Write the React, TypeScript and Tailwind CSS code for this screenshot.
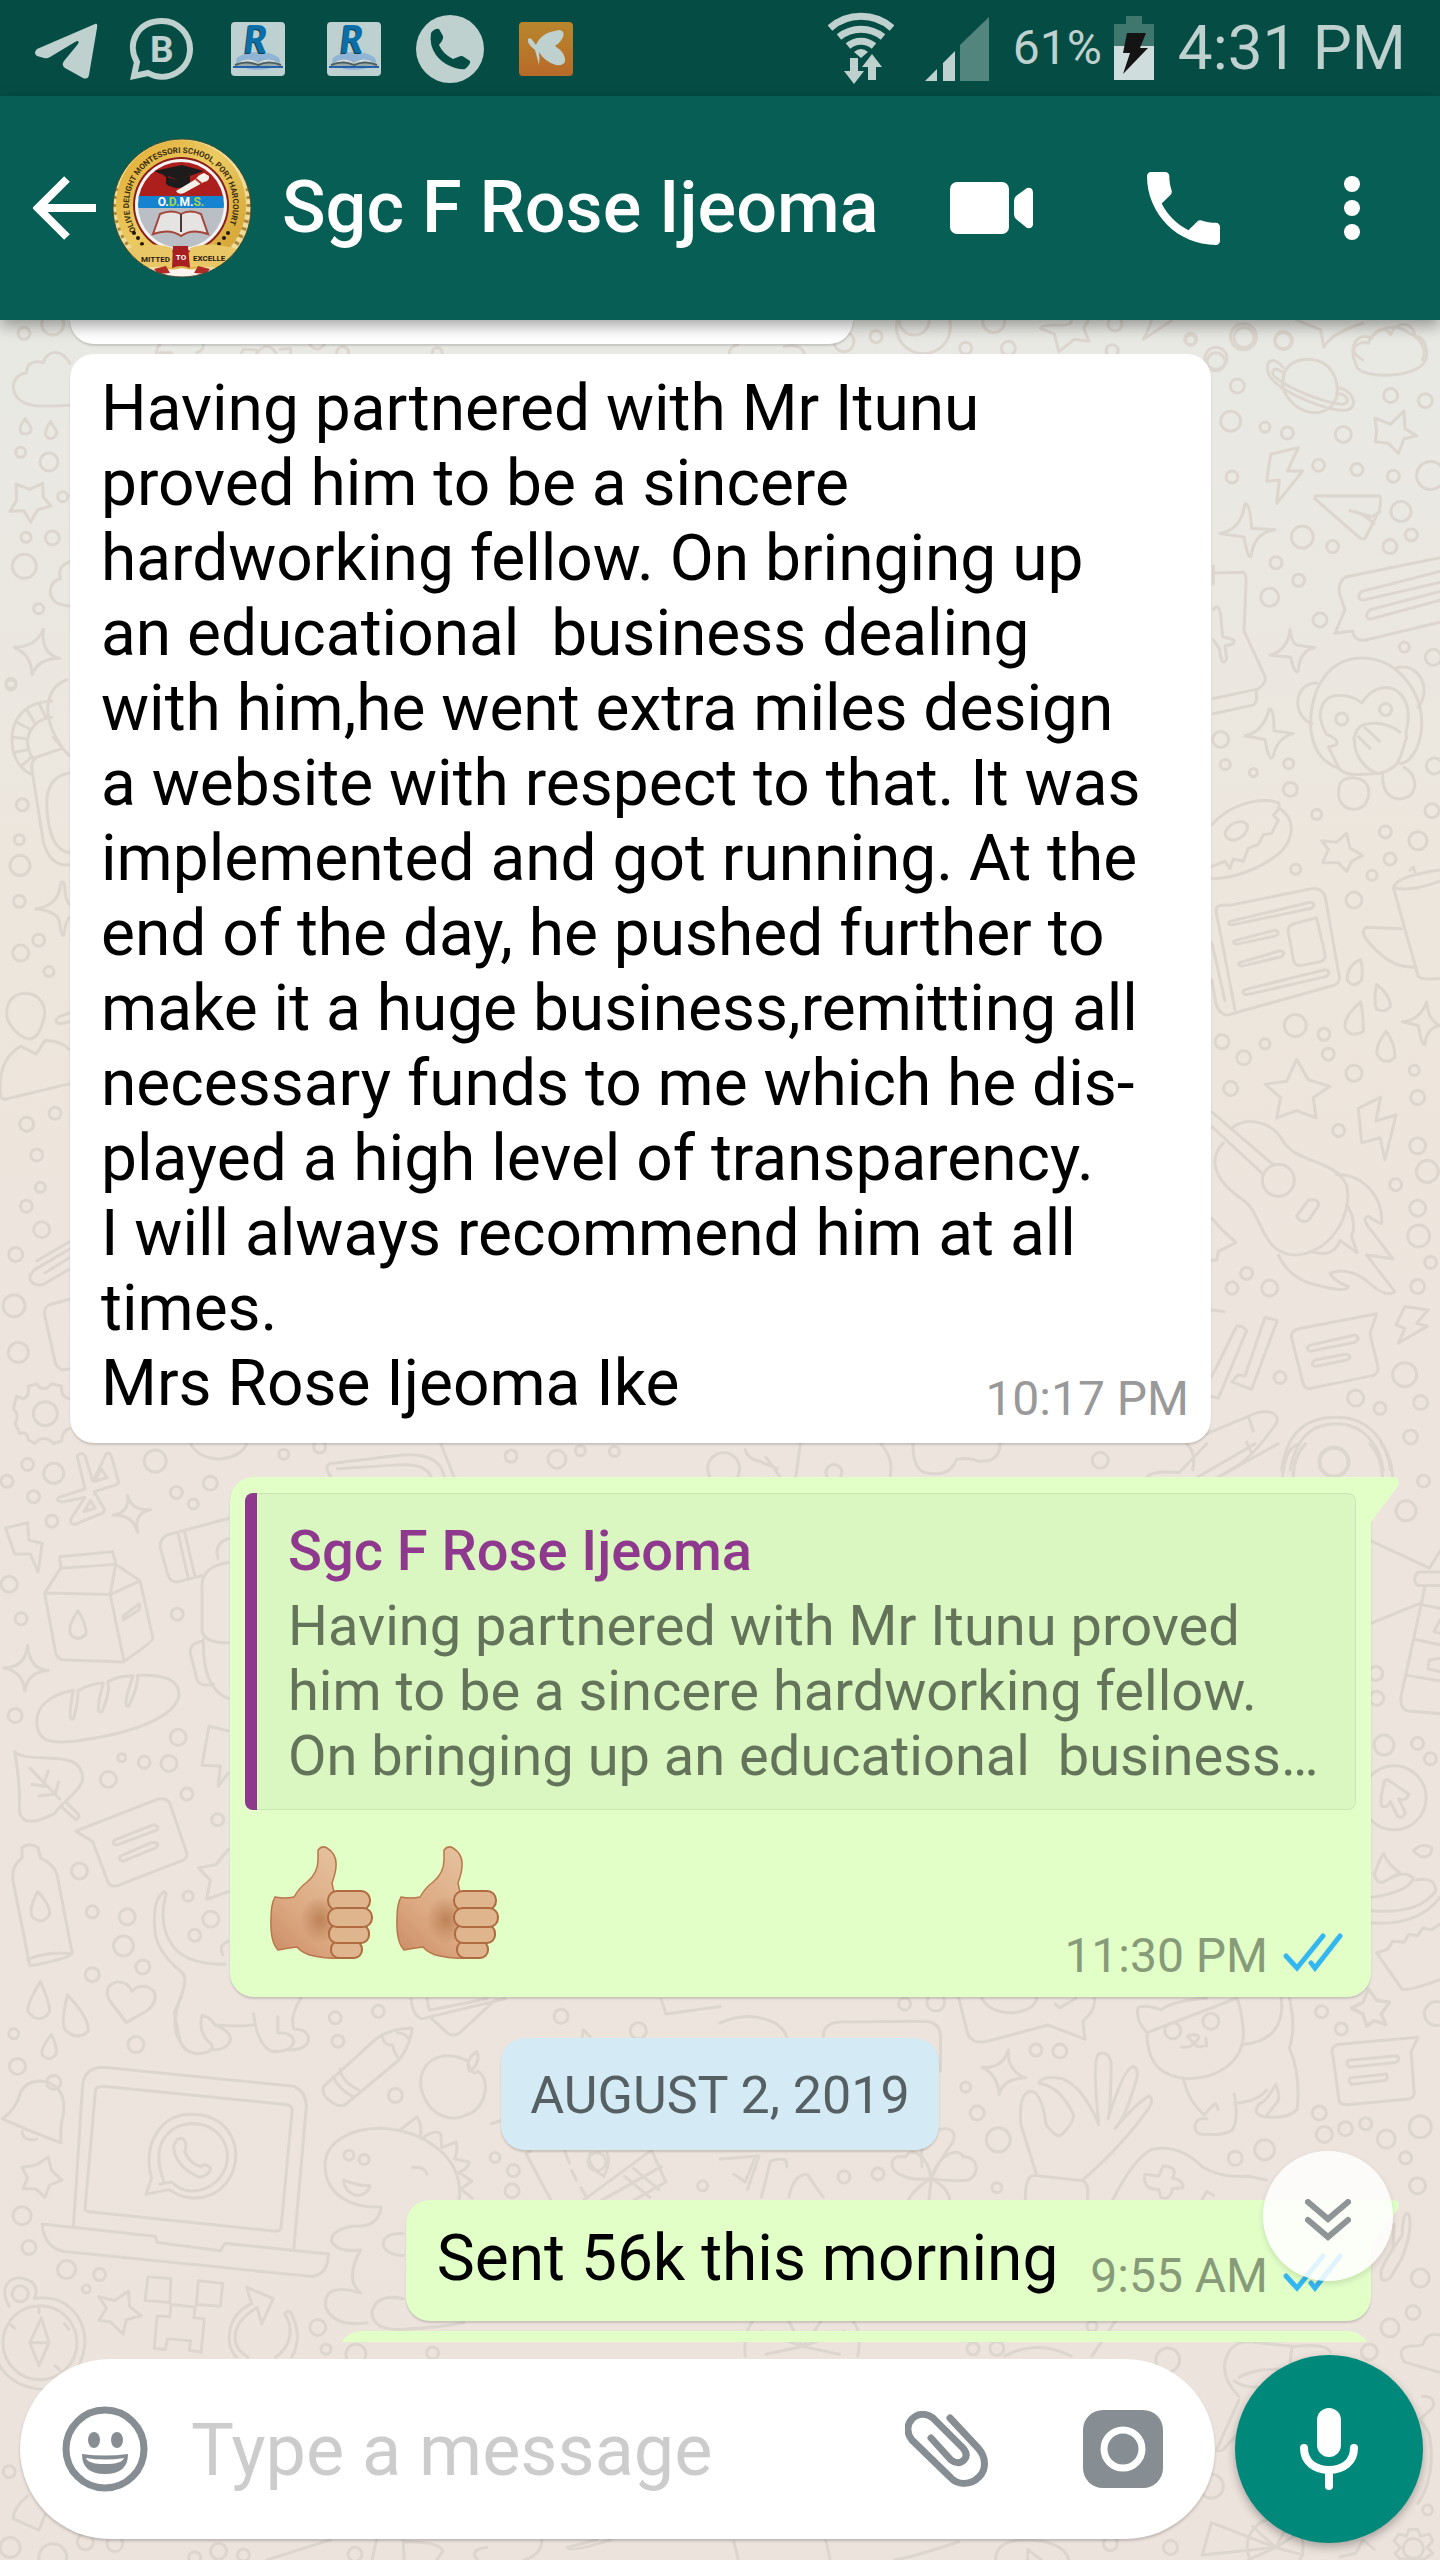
import type { ReactNode } from 'react';

type Patch = {
    x: number;
    y: number;
    sx: number;
    sy: number;
    paths: string[];
    dots: number[][];
};

// Wallpaper doodles, grouped by the area of the screen they sit in.
// dots are [x, y, radius]
const patches: Patch[] = [
    {
        x: 0, y: 300, sx: 0.3333, sy: 0.3333,
        paths: [
            'M210 190C180 140 140 155 130 188C100 180 80 190 80 218C40 225 30 260 50 290C75 325 130 320 210 315',
            'M76 356C60 375 55 390 66 400C80 405 95 400 93 385C90 370 80 370 76 356Z',
            'M152 364C136 385 132 405 142 413C155 420 172 410 170 395C165 378 155 380 152 364Z',
            'M48 552L88 568L128 550L130 592L152 618L112 630L92 666L72 632L30 634L50 600Z',
            'M210 785C180 795 175 815 182 835C150 845 140 880 165 905C180 915 195 917 210 918',
            'M130 988Q122 1062 180 1075Q115 1075 96 1124Q95 1065 43 1042Q110 1040 130 988Z',
            'M470 158Q470 142 480 134M480 158H515M590 158Q612 150 610 134M725 158L730 148L770 150M770 160Q800 120 828 158M840 148L872 145V158M930 134Q950 160 972 134',
        ],
        dots: [[72, 100, 6], [158, 72, 11], [62, 457, 5], [147, 486, 9], [188, 590, 5], [78, 712, 5], [157, 714, 7], [73, 799, 12], [116, 926, 5], [33, 1150, 5], [1028, 158, 6], [1312, 158, 5]],
    },
    {
        x: 720, y: 0, sx: 0.4592, sy: 0.3333,
        paths: [
            'M765 960Q768 978 732 976Q700 975 698 985L728 1002L738 1055L772 1018L804 1024L792 985L802 960',
            'M985 960L922 1018Q935 985 940 960',
            'M1255 960L1308 990L1315 1042Q1330 1000 1400 970',
            'M1400 1080C1360 1050 1390 1020 1412 1030C1420 985 1475 965 1500 1000C1525 1010 1540 1050 1530 1080',
            'M20 1062Q20 1040 38 1035M140 1040Q175 1030 185 1062',
        ],
        dots: [[443, 980, 27], [423, 960, 15], [340, 1010, 6], [270, 1025, 10], [535, 1045, 6], [628, 1045, 7], [596, 965, 11], [854, 1052, 6], [860, 972, 7], [1025, 1018, 6], [1140, 1010, 13], [1227, 1022, 9], [1080, 1075, 11]],
    },
    {
        x: 1150, y: 320, sx: 0.3333, sy: 0.7334,
        paths: [
            'M610 50C600 25 640 18 665 25C680 10 710 10 722 20C740 0 790 2 795 22C830 22 840 50 820 60C780 78 660 80 622 66Z',
            'M400 95C390 60 440 52 485 54C540 56 570 80 560 105C540 135 440 135 400 95Z',
            'M400 65C370 48 340 55 357 75C390 100 540 125 590 123C625 120 615 95 560 92M400 72C370 62 360 70 375 78C420 95 520 112 575 115C600 115 600 102 560 100',
            'M362 183L445 174L412 206L458 206L380 250L388 218L350 220Z',
            'M285 250Q300 250 305 284L375 286Q312 290 303 322Q295 328 282 296L210 291Q275 286 285 250Z',
            'M495 240L690 240Q695 242 688 260L645 298Q635 300 622 294L495 244M600 260Q640 262 672 278M600 260L665 268L690 262',
            'M680 152L675 134L722 142L762 124L765 148L800 158L762 162L745 182L715 168L676 166Z',
            'M190 345L280 344Q290 346 288 360L282 424L345 486Q350 495 325 503L190 516M190 537L310 525Q325 520 318 505M190 360V335M190 395Q205 385 212 402L218 432L250 436Q262 442 225 444L230 462Q215 475 208 448L190 436',
            'M420 422Q425 440 440 443L495 447Q450 450 445 478Q435 485 422 460L360 457Q415 450 420 422Z',
            'M870 324L590 350Q565 355 568 372L585 395L555 427L608 424Q615 440 650 436L870 412M870 343L635 370Q615 380 640 382L870 358M870 370L660 395Q640 405 660 408L870 382',
            'M500 495C430 495 425 540 485 550M735 475C800 465 850 500 805 528',
            'M482 555C480 500 540 460 640 461C750 463 820 510 815 555C810 590 770 605 750 605M482 555Q490 600 570 612',
            'M635 522C690 485 780 500 775 545C770 565 765 560 770 570C750 590 760 610 690 618C620 620 590 622 568 612L535 582C580 580 560 570 530 565C490 535 520 510 570 512Q610 512 635 522Z',
            'M612 570Q620 555 640 552Q700 545 750 562M612 570Q615 605 680 618M625 568L660 584M645 556L688 574',
            'M570 632C555 655 580 668 615 667C660 665 665 640 645 630C620 622 585 622 570 632ZM698 620C695 650 740 658 775 650C805 640 800 620 762 610',
            'M358 530Q372 530 372 560L430 564Q380 570 370 595Q358 605 345 572L285 567Q340 562 358 530Z',
            'M186 688C240 660 330 650 385 658Q395 665 370 675L385 682L365 700L340 702L325 715L295 720L280 738L250 735L240 748L225 738L186 745M385 665C440 680 435 710 380 730Q290 760 186 762',
            'M225 700C240 680 300 680 292 694C280 710 230 715 225 700Z',
            'M518 740L535 722L515 710L560 712L590 700L600 720L638 730L605 738L590 752L565 740Z',
            'M870 750Q740 758 730 774L805 895Q815 900 870 898M730 774Q780 780 870 765M755 830L650 828Q630 832 650 845Q720 885 795 882M780 750L790 746L795 752',
            'M200 810Q190 795 240 798L490 775Q515 775 525 785L568 895Q570 905 545 908L230 948Q200 945 195 925L186 900M200 810L255 940M186 850L225 928',
            'M240 820L480 794Q500 796 485 802L245 825Q230 824 240 820ZM255 846L375 832Q395 835 375 840L260 851Q245 850 255 846ZM270 876L390 860Q410 862 395 868L275 881Q260 880 270 876ZM285 913L525 886Q545 888 530 895L290 920Q270 918 285 913Z',
            'M415 835Q410 825 440 822L500 815L525 865Q530 872 510 875L455 880Q435 882 430 872Z',
            'M632 872Q590 880 592 900Q610 912 635 900Q640 885 632 872ZM680 906Q670 930 680 940Q705 945 722 936Q720 920 680 906ZM632 930Q580 950 585 965Q600 980 640 970Q640 945 632 930ZM708 970Q675 990 682 1002Q705 1018 735 1005Q735 985 708 970Z',
            'M830 930Q835 955 870 962Q830 965 825 988Q815 990 805 962L757 957Q810 955 830 930Z',
            'M345 1042L410 1038L440 1008L475 1036L540 1045L490 1060L498 1088L440 1078L380 1088L392 1060Z',
            'M625 1075L692 1060L678 1092L738 1084L705 1145L690 1115L635 1122Z',
            'M186 1080L370 1152M186 1100L340 1165M250 1100C300 1085 370 1095 400 1120C440 1150 560 1145 590 1180C610 1220 540 1275 430 1275C330 1270 340 1220 280 1200C180 1170 180 1140 220 1122',
            'M560 1165C640 1165 700 1195 695 1232Q680 1230 655 1222Q630 1225 670 1245L728 1280L650 1275L735 1325Q710 1335 650 1310Q590 1290 540 1300Q550 1310 595 1318Q590 1328 470 1312Q410 1300 385 1275M595 1210Q620 1230 605 1250L622 1272L570 1255Q550 1280 480 1270',
            'M440 1222L475 1200Q510 1198 505 1208L475 1228Q450 1232 440 1222Z',
            'M186 1225L215 1240L258 1258L205 1270L200 1282H186M186 1350L222 1352',
            'M186 1440L260 1372Q275 1370 290 1378L205 1470L186 1468M345 1360L382 1364L305 1458L245 1448L265 1438L285 1440Z',
            'M425 1388Q420 1378 450 1375L680 1355L660 1382L685 1430Q680 1440 660 1440L480 1457Q465 1458 458 1448ZM480 1398L615 1384Q635 1388 615 1394L480 1406Q462 1402 480 1398ZM495 1418L590 1410Q610 1414 590 1418L495 1427Q478 1424 495 1418Z',
            'M765 1345L835 1350L800 1368L832 1372L745 1395L765 1375L738 1370Z',
            'M110 1530L320 1490C370 1485 400 1495 370 1510Q300 1555 240 1568M295 1495L310 1515M290 1530L305 1545M110 1532Q140 1545 128 1568',
            'M395 1568C410 1520 460 1496 560 1496C660 1496 710 1530 722 1568M420 1568C440 1525 480 1505 560 1505C640 1505 690 1535 700 1568',
        ],
        dots: [[282, 24, 10], [400, 28, 8], [122, 27, 5], [198, 57, 9], [262, 90, 7], [242, 138, 10], [345, 146, 5], [412, 154, 6], [580, 156, 8], [722, 103, 7], [826, 110, 7], [246, 214, 6], [506, 198, 6], [621, 204, 6], [730, 213, 6], [842, 212, 14], [753, 261, 10], [784, 293, 6], [457, 296, 11], [548, 309, 6], [720, 309, 7], [378, 331, 6], [446, 355, 6], [359, 378, 9], [510, 409, 7], [763, 446, 5], [850, 460, 8], [575, 544, 6], [707, 531, 6], [212, 572, 8], [226, 606, 5], [310, 617, 4], [416, 605, 5], [421, 640, 7], [500, 674, 5], [853, 608, 8], [846, 669, 7], [706, 698, 6], [720, 735, 6], [804, 710, 9], [666, 757, 5], [612, 791, 8], [437, 749, 5], [436, 962, 11], [216, 984, 7], [281, 1006, 7], [345, 987, 5], [522, 974, 6], [535, 1001, 6], [612, 1027, 8], [793, 1023, 5], [803, 1060, 7], [242, 1048, 7], [566, 1105, 6], [803, 1126, 8], [832, 1161, 11], [737, 1179, 6], [803, 1211, 8], [806, 1249, 11], [842, 1285, 6], [385, 1173, 16], [290, 1300, 6], [246, 1320, 6], [359, 1320, 8], [803, 1318, 7], [390, 1442, 6], [764, 1438, 12], [617, 1470, 8], [690, 1484, 6], [812, 1476, 7], [782, 1523, 7], [552, 1557, 15]],
    },
    {
        x: 0, y: 680, sx: 0.3333, sy: 0.4974,
        paths: [
            'M155 42C60 45 30 90 37 130C40 160 65 180 95 190M185 135C110 60 150 10 200 0M155 75C90 80 75 120 85 135Q90 155 105 158M40 115L78 118M50 85L88 98M80 60L103 85M118 48L135 72M45 145L85 140M65 172L95 155',
            'M185 138L110 155Q90 165 97 185L130 325Q150 375 207 372M207 187Q140 195 140 250Q145 340 207 347M160 115L207 152',
            'M182 410Q190 400 194 415Q195 440 207 450M107 460Q175 455 182 410M107 460Q170 465 178 485Q185 520 192 512Q195 490 207 478',
            'M20 670C20 640 50 630 78 630C120 632 140 655 132 680C122 705 110 722 85 722C50 715 20 690 20 670Z',
            'M62 736C30 750 0 770 0 820Q0 845 15 843L207 812M62 736L108 752L135 725Q180 725 207 742M207 670Q165 678 168 686Q175 695 207 687',
            'M110 1168L207 1130M207 1145L105 1185Q80 1200 95 1210Q110 1220 130 1215L207 1185M135 1192L207 1162M207 1245L148 1256Q130 1262 135 1280L165 1370Q170 1385 190 1387L207 1385',
            'M85 1420L110 1415Q130 1435 155 1415L185 1420Q180 1440 207 1445M85 1420Q90 1440 70 1445L50 1440L40 1465Q60 1478 45 1495L60 1515Q80 1508 85 1528L105 1535Q130 1515 160 1535L185 1530Q185 1510 207 1505',
        ],
        dots: [[33, 10, 5], [67, 251, 6], [58, 321, 5], [60, 373, 10], [58, 445, 6], [62, 549, 8], [116, 523, 6], [147, 586, 5], [165, 871, 6], [80, 893, 7], [110, 955, 6], [121, 1020, 5], [79, 1058, 6], [125, 1105, 8], [47, 1155, 7], [42, 1258, 11], [55, 1352, 10], [136, 1475, 12]],
    },
    {
        x: 0, y: 1440, sx: 0.4592, sy: 0.3827,
        paths: [
            'M168 42Q175 30 185 40L202 108L232 35Q240 30 243 45L258 108Q258 118 245 120L205 135L227 180Q228 192 215 195L165 220Q150 222 155 205L185 150L135 162Q120 160 128 150L185 128Z M207 108L220 75L233 98ZM183 187L197 158L207 178Z',
            'M278 145Q285 185 328 182Q290 190 300 242Q290 195 247 196Q282 190 278 145Z',
            'M12 230L60 216L63 262L92 270L83 345L66 298L32 298Z',
            'M97 400L132 335L252 325L305 368L333 518Q335 525 268 580L135 574Q125 570 122 560ZM97 400L240 404L252 325M240 404L270 578M240 404L305 368M132 332L130 305L245 292L253 325',
            'M170 446Q145 490 155 510Q170 528 187 508Q190 485 170 446ZM268 460L304 428V443L268 470Z',
            'M60 537Q65 600 105 602Q60 605 54 656Q50 605 8 596Q55 595 60 537Z',
            'M80 735C80 690 115 665 160 654Q145 740 160 728Q170 690 170 655Q200 635 225 635Q205 720 222 710Q240 660 235 632Q260 615 290 616Q265 700 280 696Q300 650 300 615Q390 610 390 665C385 720 300 760 200 780C110 800 80 790 80 735Z',
            'M32 815C60 850 180 800 180 885C175 920 130 950 120 975Q50 1020 42 970Q45 900 32 815ZM65 857L130 938M105 865L95 900M70 900L100 905M128 893L120 925L85 930M135 960L165 992Q178 985 168 975L143 945',
            'M165 1022L345 938Q365 935 370 950L407 1080Q408 1095 395 1100L255 1165Q240 1168 235 1155L202 1050ZM250 1045L335 1005Q350 1010 340 1020L255 1058Q242 1058 250 1045ZM263 1087L330 1052Q350 1050 340 1065L270 1100Q255 1100 263 1087Z',
            'M48 1092V1065Q65 1050 83 1065L88 1092Q120 1110 125 1140L157 1340Q155 1355 65 1374L28 1150Q25 1110 48 1092ZM60 1358Q100 1335 155 1342M82 1180Q62 1225 70 1245Q90 1270 108 1240Q110 1215 82 1180Z',
            'M497 205L365 248Q345 260 350 285L365 350Q370 375 390 370L438 355M388 245L410 362M402 240L425 358M497 320Q440 330 440 380V500Q445 530 497 530M497 258Q465 270 475 310M443 525Q410 530 415 560L430 630Q440 645 465 638M443 520Q440 650 497 675',
            'M497 760L455 748L440 850L480 852L475 905L497 870M497 1070L470 1110L432 1118L458 1150L450 1200L497 1180',
            'M358 1180Q330 1200 338 1290Q345 1340 395 1390Q410 1405 395 1450Q370 1530 390 1568M362 1185Q345 1260 370 1310Q395 1370 490 1370M497 1310Q475 1320 485 1345',
            'M88 1415Q55 1480 62 1495Q85 1530 108 1495Q110 1475 88 1415ZM147 1450Q130 1530 145 1545Q170 1570 192 1545Q195 1510 147 1450Z',
            'M275 1522L237 1462Q225 1425 255 1416Q280 1415 287 1440Q310 1415 335 1440Q345 1465 322 1490Z',
            'M720 95Q700 60 730 60L870 40Q960 30 968 100M735 75L870 65Q930 60 940 100M960 10L990 100M415 10Q430 45 475 50Q525 45 537 10',
            'M895 1460Q900 1510 920 1512L1100 1460M930 1460L935 1490L1060 1460M940 1512L975 1550Q985 1560 1000 1550L1080 1462M1440 1462L1450 1500L1568 1480',
        ],
        dots: [[338, 55, 11], [117, 87, 10], [60, 64, 6], [15, 108, 6], [73, 148, 6], [113, 212, 6], [458, 113, 7], [384, 137, 6], [421, 167, 5], [20, 377, 8], [46, 467, 6], [386, 455, 6], [33, 720, 7], [388, 777, 8], [265, 830, 4], [314, 842, 6], [368, 845, 8], [236, 887, 8], [407, 925, 6], [474, 992, 6], [173, 1126, 8], [410, 1192, 5], [201, 1233, 6], [277, 1246, 8], [459, 1252, 8], [424, 1294, 6], [269, 1322, 10], [311, 1377, 7], [201, 1397, 7], [618, 37, 5], [696, 18, 6], [1113, 42, 6], [1213, 50, 9], [1264, 28, 5], [1338, 30, 5]],
    },
    {
        x: 720, y: 1440, sx: 0.4592, sy: 0.3827,
        paths: [
            'M1225 97C1230 40 1240 20 1260 10M1465 97Q1462 40 1440 10M1248 97Q1250 40 1275 10M1443 97Q1440 40 1415 10M55 25Q60 50 85 55L125 75M130 95L100 45M165 97L175 10M370 97Q380 50 350 10M420 10Q420 75 445 85Q500 100 515 50Q545 45 560 55Q610 60 610 10M930 97Q940 80 1000 85L1060 10M1040 97L1165 10M1085 97L1215 10',
            'M1420 265L1545 335L1568 290M1420 478L1528 425M1568 345H1520Q1505 365 1520 380H1568M1535 385L1483 670Q1480 705 1500 708L1568 715M1525 430L1568 440M1510 520L1568 535M1497 615L1568 630M1568 470L1555 500L1568 505M1568 570L1545 575L1542 598L1568 605',
            'M1440 930L1447 890Q1455 885 1460 893L1500 925Q1495 945 1478 938L1493 975Q1485 992 1475 982L1460 945Q1450 965 1440 955Z',
            'M1510 1075Q1525 1050 1550 1065Q1550 1095 1525 1088Z',
            'M1425 1135Q1430 1160 1445 1155L1480 1130Q1455 1110 1445 1080Q1435 1100 1425 1135ZM1445 1155Q1490 1120 1510 1145Q1500 1180 1420 1195M1515 1150Q1560 1140 1558 1180Q1520 1240 1420 1230M1568 1195Q1520 1270 1420 1262',
            'M1568 1265L1548 1280L1530 1275L1520 1295L1500 1292L1490 1312L1465 1310L1455 1330L1430 1340L1485 1435Q1500 1440 1568 1410',
            'M1375 1485L1400 1470L1412 1435L1430 1465L1458 1470L1440 1500L1450 1528L1425 1518L1408 1532L1400 1500Z',
        ],
        dots: [[1337, 58, 14], [1532, 107, 6], [1494, 185, 10], [1428, 610, 7], [1430, 675, 7], [1446, 797, 10], [1519, 793, 6], [1547, 833, 6], [1468, 935, 32], [828, 53, 8], [248, 85, 8], [8, 75, 16]],
    },
    {
        x: 0, y: 1960, sx: 0.4592, sy: 0.3827,
        paths: [
            'M112 195Q85 235 93 250Q108 268 122 245Q125 225 112 195Z',
            'M5 415Q35 390 45 345Q60 310 100 318Q145 335 138 400Q130 440 133 478Q70 450 5 415ZM48 448Q50 475 80 468',
            'M160 695L180 325Q185 280 225 280L640 330Q668 345 667 385L640 752M185 650L208 340Q210 330 225 330L625 378Q637 380 636 395L612 700Q610 710 595 708L195 658Q185 655 185 650Z',
            'M92 690L338 722L342 738L480 760L490 740L715 768Q715 820 680 827L140 762Q95 750 92 690Z',
            'M318 612L330 570C310 480 350 400 420 403C490 405 520 470 512 530C500 610 430 650 368 600ZM348 585Q360 588 355 572C330 490 360 430 420 427C480 430 505 490 492 540C470 610 400 620 375 580Z',
            'M385 470Q400 460 405 480Q405 495 402 500Q415 535 438 540Q445 530 458 542Q460 560 435 568Q380 540 378 485Z',
            'M48 542L80 535L105 515L112 550L135 575L108 588L98 620L78 598L50 598L60 570Z',
            'M705 330L820 205Q850 180 897 178Q895 220 870 260L755 375Q740 390 715 365Q700 350 705 330ZM740 285Q745 320 785 342M725 305Q740 340 770 358M832 195Q835 225 855 222Q860 250 870 258M865 190Q880 190 890 205',
            'M1020 265C960 225 905 270 918 340C935 410 985 425 1015 405C1060 390 1070 310 1040 290C1035 300 1022 295 1020 265ZM1022 290Q1012 260 1038 240Q1048 265 1025 290',
            'M830 645C760 650 710 610 708 540C705 480 760 435 840 440C930 450 1010 520 1000 625M870 445L908 410Q920 430 915 465M920 465Q950 440 960 455L962 490L993 475Q998 500 990 520L1022 528Q1020 545 1000 555L1028 578L1003 598L1028 622M748 575Q780 590 805 590Q800 615 775 615Q750 605 748 575ZM898 542Q925 540 930 560M830 645Q825 700 770 695Q720 705 722 735Q735 765 785 758Q750 835 785 870Q700 840 710 910Q730 960 800 948',
            'M878 715C820 710 820 770 878 772M878 885Q820 870 810 920Q810 970 880 965Q960 960 1010 948',
            'M440 145Q430 190 460 220Q470 240 430 245Q395 240 390 200L380 140Q385 115 395 98M440 145Q460 150 468 170Q520 175 550 170M468 170Q510 190 500 215Q490 235 465 235M552 140Q560 220 590 238Q630 245 640 215Q640 190 605 190V148M655 100Q630 150 640 180Q670 180 672 205Q670 235 630 235',
            'M322 828L372 832L370 895L316 890ZM432 838L485 845L480 905L428 900ZM372 900L425 907L422 935L445 938L438 1025L412 1020L415 995L365 990L360 1018L336 1015L342 930L370 932Z',
            'M215 880L250 890L280 865L282 905L308 930L275 940L268 978L240 945L215 942L232 910Z',
            'M537 855L595 885L570 950L560 908C500 950 500 1010 540 1038M620 925C640 960 635 1010 600 1038M537 855L548 898C490 930 490 1010 515 1038M620 925Q632 905 640 940C655 980 645 1020 635 1038',
            'M20 905C-5 850 25 825 50 832C85 840 80 870 75 885C140 870 185 930 185 1000C180 1080 130 1130 80 1120C40 1115 10 1085 0 1060M90 935L107 1000L85 1060L65 1000ZM65 1000H107M140 950L150 965M85 910V922M20 950L32 962M120 1060L130 1072',
            'M60 1400Q30 1430 28 1460L85 1490L98 1450',
            'M1070 428L1090 420M1268 200L1270 182L1285 200M1145 505L1200 628M1145 505L1155 500M1230 500L1240 530M1245 550L1255 575M1265 595L1275 615M1270 628L1415 500M1310 628L1440 540M1360 565L1415 620M1380 545L1435 600M1420 500L1450 580L1380 628M1315 565Q1275 535 1285 505M1315 565Q1330 530 1322 505',
            'M810 1568L820 1515M880 1568L878 1515M880 1520Q960 1520 965 1545L950 1568M1040 1568Q1020 1540 1060 1535M1180 1515Q1180 1555 1140 1568M1235 1535L1300 1515M1235 1535Q1240 1550 1330 1515M580 1568L720 1515',
        ],
        dots: [[30, 193, 5], [296, 221, 8], [38, 278, 8], [117, 320, 7], [730, 151, 6], [824, 134, 6], [736, 212, 6], [861, 354, 7], [760, 510, 5], [793, 521, 5], [48, 668, 9], [63, 751, 7], [145, 809, 9], [217, 822, 6], [188, 860, 4], [44, 872, 8], [87, 1000, 37], [692, 960, 8], [710, 1017, 5], [775, 1030, 10], [942, 1027, 6], [1078, 516, 5], [1118, 550, 6], [1115, 603, 7], [1222, 147, 7], [1390, 185, 8], [1300, 527, 9], [1530, 590, 5], [20, 1337, 6], [22, 1535, 10], [186, 1520, 8], [250, 1525, 8], [476, 1545, 8], [530, 1555, 6], [424, 1562, 6], [773, 1553, 7], [115, 1562, 14]],
    },
    {
        x: 720, y: 1960, sx: 0.4592, sy: 0.3827,
        paths: [
            'M520 100L540 195Q550 220 580 213L715 170L795 207L790 160Q820 130 815 100M570 100Q590 140 640 138Q685 130 690 100M730 115L740 125L775 100',
            'M628 235Q625 290 665 308Q615 310 608 352Q605 300 570 280Q615 285 628 235Z',
            'M690 563L655 430Q650 350 675 343Q700 340 710 430Q735 470 745 455Q775 420 768 400Q740 330 695 322Q700 300 745 310Q790 330 825 430Q810 260 825 245Q845 235 852 270Q850 400 845 415Q880 280 900 278Q915 285 905 320Q880 420 860 440Q910 370 935 355Q945 365 935 385Q880 480 790 575M665 625Q665 560 685 563L790 577Q805 585 800 628',
            'M930 190Q905 160 910 125Q925 115 960 130Q990 105 1060 100M1125 100Q1135 120 1140 190C1140 270 1080 310 1020 310C960 305 930 270 930 190ZM1140 220C1200 215 1230 170 1222 100M1240 100Q1255 180 1240 230Q1265 300 1257 390Q1240 415 1190 410Q1155 405 1175 375Q1190 370 1210 325Q1220 350 1215 370Q1200 390 1190 408M1010 315Q1020 370 1055 405Q1070 380 1080 375L1085 390M1120 350Q1130 420 1115 445Q1090 460 1065 455Q1030 460 1035 430Q1040 410 1060 415M1120 375Q1170 370 1190 340',
            'M1018 200Q1030 190 1043 200Q1040 215 1030 215ZM1030 215Q1030 230 1005 228M1030 215Q1040 235 1060 220M1060 225L1058 205',
            'M1333 235Q1335 222 1350 220L1520 202L1505 240L1512 350Q1510 362 1495 364L1365 378Q1350 378 1348 365ZM1368 262L1475 250Q1482 262 1472 268L1370 280Q1362 270 1368 262ZM1372 308L1450 298Q1458 310 1448 315L1375 325Q1367 315 1372 308Z',
            'M1375 125L1400 110L1412 75L1430 105L1458 110L1440 140L1450 168L1425 158L1408 172L1400 140Z',
            'M460 570C420 580 360 560 378 520Q385 510 405 515C410 490 450 500 460 570C480 500 520 490 530 515C560 510 570 560 540 575Q500 580 460 570ZM460 570L455 628M460 570Q420 600 410 628M460 570Q500 600 500 628M440 540Q430 450 490 440Q520 445 505 480Q480 520 460 570',
            'M855 628Q900 520 940 495Q1000 480 1050 540Q1090 570 1150 565L1190 575M925 560L955 565L965 538Q1000 540 985 570Q1010 575 1008 595L985 598Q980 630 960 620L955 600Q920 600 925 560ZM1050 625L1060 605L1075 615',
            'M225 200Q225 165 260 162L450 160Q480 165 480 200V290M0 165Q60 130 120 165Q140 180 145 200',
            'M0 520L85 512L60 600M30 560L55 580L75 520M90 620L110 525Q150 510 145 540M150 620Q160 560 190 560L225 620',
            'M55 1035Q50 980 70 945M300 1035Q310 970 290 945M180 1010L90 970M180 1010L100 1030M180 1010L150 945M180 1010L220 945M180 1010L270 970M180 1010L260 1030M620 1035Q690 990 765 1035M810 1035L860 945',
            'M1130 1140Q1080 1080 1110 1020Q1130 990 1170 1000L1250 1010Q1320 1000 1330 1025M1130 1090Q1170 1065 1240 1070L1245 1015M1120 1100Q1140 1120 1180 1115M1130 1150L1085 1270Q1075 1290 1095 1280L1180 1170',
            'M1490 1050Q1470 1010 1510 1008Q1520 1010 1530 1005Q1540 970 1568 980M1490 1050L1568 1078M1530 1140Q1560 1140 1552 1170L1525 1200L1545 1240Q1560 1350 1520 1420',
            'M1070 1470L1050 1555L1210 1535ZM1210 1535L1160 1480M1210 1535L1235 1480M1210 1535L1150 1568M1210 1535L1270 1555M1210 1535L1270 1490',
            'M1495 1505L1500 1488H1520L1525 1505L1545 1500L1552 1518L1540 1535L1552 1550L1535 1565H1480L1470 1550L1482 1535L1468 1518L1478 1500Z',
            'M1440 810Q1435 850 1460 830L1485 780Q1510 700 1500 665Q1488 650 1485 720Q1450 780 1440 810M1465 760L1468 690',
            'M30 1520L40 1568M230 1515L240 1568M380 1568Q420 1560 520 1520M600 1568Q600 1515 670 1515Q750 1520 760 1568M670 1568V1540L700 1568M1350 1560L1385 1550L1400 1515L1425 1540',
        ],
        dots: [[402, 115, 6], [470, 110, 9], [688, 235, 6], [740, 238, 7], [535, 332, 5], [560, 400, 7], [606, 470, 12], [986, 185, 8], [1069, 160, 8], [1310, 135, 6], [1353, 180, 6], [1560, 140, 12], [1305, 400, 7], [1316, 456, 8], [1362, 441, 7], [1406, 428, 6], [1451, 468, 9], [1525, 436, 11], [1493, 517, 6], [1519, 590, 8], [1186, 496, 10], [1122, 518, 7], [270, 567, 6], [344, 559, 6], [603, 595, 5], [1525, 831, 9], [1509, 921, 7], [1459, 961, 9], [1414, 1024, 8], [810, 957, 5], [551, 1016, 6], [603, 1015, 7], [975, 1045, 12], [1070, 1375, 12], [850, 1525, 7], [981, 1535, 7], [1541, 1437, 5], [1209, 1533, 28], [1510, 1538, 10]],
    },
];

function Wallpaper() {
    return (
        <svg
            className="absolute inset-0 h-full w-full"
            viewBox="0 0 1440 2560"
            preserveAspectRatio="xMidYMin slice"
            fill="none"
            stroke="#dcd6ce"
            strokeWidth="3"
            strokeLinejoin="round"
            strokeLinecap="round"
            aria-hidden="true"
        >
            {patches.map((p, i) => (
                <g key={i}>
                    <g transform={`translate(${p.x} ${p.y}) scale(${p.sx} ${p.sy})`}>
                        {p.paths.map((d, j) => (
                            <path key={j} d={d} vectorEffect="non-scaling-stroke" />
                        ))}
                    </g>
                    {p.dots.map(([x, y, r], j) => (
                        <circle key={j} cx={p.x + x * p.sx} cy={p.y + y * p.sy} r={r} />
                    ))}
                </g>
            ))}
        </svg>
    );
}

function NotificationIcon({ children }: { children: ReactNode }) {
    return (
        <svg className="h-24 w-24 shrink-0" viewBox="0 0 96 96" fill="#bfd1cf" aria-hidden="true">
            {children}
        </svg>
    );
}

function ReaderIcon() {
    return (
        <NotificationIcon>
            <rect x="21" y="22" width="54" height="54" rx="4" fill="#bdd1d0" />
            <ellipse cx="48" cy="61" rx="22" ry="9" fill="#8fb4d6" />
            <text x="33" y="54" fontFamily="Lato, sans-serif" fontWeight="900" fontStyle="italic" fontSize="38" fill="#12404a">R</text>
            <text x="34" y="53" fontFamily="Lato, sans-serif" fontWeight="900" fontStyle="italic" fontSize="38" fill="#0a6ea8">R</text>
            <path d="M24 66Q34 56 48 62Q62 56 72 66Z" fill="#9aa9a8" />
            <path d="M28 64Q38 57 48 64Q58 57 68 64" fill="none" stroke="#d4dddc" strokeWidth="2" />
            <path d="M25 65Q37 60 48 65Q59 60 71 65" fill="none" stroke="#4e6165" strokeWidth="2" />
            <path d="M23 67H73" stroke="#2461a8" strokeWidth="2" />
        </NotificationIcon>
    );
}

function StatusBar() {
    return (
        <div className="flex h-24 shrink-0 items-center justify-between bg-[#054d44] pr-[34px] pl-[18px] text-[#bfd1cf]">
            <div className="flex">
                <NotificationIcon>
                    <path d="M77 24Q80 23 79 28L71 75Q70 80 65 78L47 68Q43 65 46 61L60 44Q62 39 57 42L32 57Q29 59 26 58L19 56Q15 53 19 49Z" />
                </NotificationIcon>
                <NotificationIcon>
                    <path d="M20 76L23 62C12 43 24 21 48 21C64 21 76 34 76 49C76 70 53 84 34 73Z" fill="none" stroke="#bfd1cf" strokeWidth="6" />
                    <text x="36" y="62" fontFamily="Roboto, sans-serif" fontWeight="700" fontSize="37">B</text>
                </NotificationIcon>
                <ReaderIcon />
                <ReaderIcon />
                <NotificationIcon>
                    <circle cx="48" cy="49" r="34" />
                    <path d="M29 33Q33 28 37 29L41 36Q42 39 37 45Q41 54 51 59L56 57Q60 55 62 57L68 61Q69 64 63 69Q58 70 48 66Q39 62 34 55Q27 45 29 33Z" fill="#054d44" />
                </NotificationIcon>
                <NotificationIcon>
                    <defs>
                        <linearGradient id="amber" x1="0" y1="0" x2="0" y2="1">
                            <stop offset="0" stopColor="#b8862c" />
                            <stop offset="1" stopColor="#b86a29" />
                        </linearGradient>
                    </defs>
                    <rect x="21" y="22" width="54" height="54" rx="4" fill="url(#amber)" />
                    <path d="M30 39Q33 37 35 41L38 45Q43 32 62 30Q68 32 64 39Q62 43 57 46Q68 53 67 62Q64 66 58 65Q47 62 41 52Q42 58 41 65Q39 57 37 50Q29 44 30 39Z" />
                </NotificationIcon>
            </div>
            <div className="flex items-center">
                <svg className="h-24 w-[66px]" viewBox="0 0 66 96" fill="#bfd1cf" aria-hidden="true">
                    <g fill="none" stroke="#bfd1cf" strokeWidth="7">
                        <path d="M2 28A47 47 0 0 1 64 28" />
                        <path d="M11 37A35 35 0 0 1 55 37" />
                        <path d="M20 46A20 20 0 0 1 46 46" />
                    </g>
                    <path d="M26 52Q33 46 40 52L33 58Z" />
                    <path d="M22 58H30V71H36L26 84L16 71H22Z" />
                    <path d="M44 54L54 67H48V80H40V67H34Z" />
                </svg>
                <svg className="ml-[31px] h-24 w-16" viewBox="0 0 64 96" fill="#bfd1cf" aria-hidden="true">
                    <path d="M0 81H12V69ZM18 81H30V51L18 63Z" />
                    <path d="M35 81H64V17L35 45Z" fill="#52857e" />
                </svg>
                <span className="ml-6 text-5xl leading-[64px]">61%</span>
                <svg className="ml-3 h-24 w-10" viewBox="0 0 40 96" aria-hidden="true">
                    <path d="M12 16H28V24H40V46H0V24H12Z" fill="#3f776f" />
                    <path d="M0 46H40V80H0Z" fill="#cfdedc" />
                    <path d="M13 33H32L26 48H34L9 74L16 53H9Z" fill="#141414" />
                </svg>
                <span className="ml-6 text-[62px] leading-[80px]">4:31 PM</span>
            </div>
        </div>
    );
}

function Avatar() {
    return (
        <svg className="ml-4 h-[140px] w-[140px] shrink-0" viewBox="0 0 140 140" role="img" aria-label="School crest">
            <defs>
                <clipPath id="badge"><circle cx="70" cy="70" r="69" /></clipPath>
                <clipPath id="disc"><circle cx="69" cy="67" r="43" /></clipPath>
                <linearGradient id="gold" x1="0" y1="0" x2="1" y2="1">
                    <stop offset="0" stopColor="#e0a92f" />
                    <stop offset="0.45" stopColor="#eccb62" />
                    <stop offset="1" stopColor="#cf9a2a" />
                </linearGradient>
                <path id="rim" d="M24 93A52 52 0 1 1 114 93" />
            </defs>
            <g clipPath="url(#badge)">
                <rect width="140" height="140" fill="#f0dc9a" />
                <path d="M4 50Q-2 85 24 118M136 50Q142 85 116 118" fill="none" stroke="#a98a3c" strokeWidth="5" strokeDasharray="3 5" />
                <circle cx="69" cy="67" r="65" fill="url(#gold)" />
                <circle cx="69" cy="67" r="48" fill="#8a1d1a" />
                <circle cx="69" cy="67" r="46" fill="#f4f4f4" />
                <g clipPath="url(#disc)">
                    <rect x="20" y="20" width="100" height="40" fill="#ad1f1c" />
                    <rect x="20" y="58" width="100" height="12" fill="#1583cf" />
                    <rect x="20" y="70" width="100" height="50" fill="#b9bfc4" />
                </g>
                <path d="M42 33L70 27L92 33L66 42ZM54 39V46Q66 54 78 46V38L66 42Z" fill="#1d1b1b" />
                <path d="M46 34Q58 36 57 48" fill="none" stroke="#1d1b1b" strokeWidth="2" />
                <path d="M64 53L84 41Q86 37 92 35L97 38Q98 43 92 44L72 55Q66 57 64 53Z" fill="#f6f1e8" />
                <path d="M84 41L90 46" stroke="#b5332b" strokeWidth="2" />
                <text x="69" y="68" textAnchor="middle" fontFamily="Roboto, sans-serif" fontWeight="700" fontSize="12" fill="#fff">
                    O.<tspan fill="#a5d64a">D.</tspan>M.<tspan fill="#a5d64a">S.</tspan>
                </text>
                <path d="M48 76L41 96Q58 90 69 98Q80 90 96 96L89 76Q78 71 69 76Q60 71 48 76Z" fill="#e6e4e2" stroke="#a4463a" strokeWidth="2" />
                <path d="M69 76V94" stroke="#4a3a3a" strokeWidth="2" />
                <text fontFamily="Roboto, sans-serif" fontWeight="700" fontSize="8" fill="#3a2c10">
                    <textPath href="#rim">OLIVE DELIGHT MONTESSORI SCHOOL, PORT HARCOURT</textPath>
                </text>
                <g fill="#1f180c">
                    <circle cx="22" cy="95" r="2" /><circle cx="26" cy="100" r="2" /><circle cx="30" cy="106" r="2" />
                    <circle cx="116" cy="95" r="2" /><circle cx="112" cy="100" r="2" /><circle cx="107" cy="106" r="2" />
                </g>
                <path d="M12 112Q40 102 60 110L62 130Q40 126 16 134ZM128 112Q98 102 78 110L76 130Q98 126 124 134Z" fill="#e9c766" />
                <path d="M36 140V130Q56 134 70 130Q84 134 104 130V140Z" fill="#fbf4f0" />
                <path d="M42 131L54 128L58 135L46 136ZM98 131L86 128L82 135L94 136Z" fill="#b02a26" />
                <path d="M61 108H76L78 130Q69 126 60 130Z" fill="#a81f22" />
                <text x="29" y="124" fontFamily="Roboto, sans-serif" fontWeight="700" fontSize="8" fill="#2a2010">MITTED</text>
                <text x="69" y="122" textAnchor="middle" fontFamily="Roboto, sans-serif" fontWeight="700" fontSize="8" fill="#fff">TO</text>
                <text x="81" y="123" fontFamily="Roboto, sans-serif" fontWeight="700" fontSize="8" fill="#2a2010">EXCELLE</text>
            </g>
            <circle cx="70" cy="70" r="69" fill="none" stroke="#3b4a2c" strokeWidth="1" />
        </svg>
    );
}

function ChatHeader() {
    return (
        <header className="relative z-10 flex h-56 shrink-0 items-center bg-[#075e54] pr-20 pl-[33px] text-white shadow-[0_6px_14px_rgba(0,0,0,0.35)]">
            <button type="button" aria-label="Back" className="shrink-0">
                <svg className="h-16 w-[63px]" viewBox="0 0 63 64" fill="none" stroke="currentColor" strokeWidth="8" aria-hidden="true">
                    <path d="M63 32H6M34 3L5 32L34 61" />
                </svg>
            </button>
            <Avatar />
            <h1 className="ml-[30px] min-w-0 flex-1 truncate text-7xl leading-[96px] font-medium">Sgc F Rose Ijeoma</h1>
            <button type="button" aria-label="Video call" className="shrink-0">
                <svg className="h-[52px] w-[83px]" viewBox="0 0 83 52" fill="currentColor" aria-hidden="true">
                    <rect width="59" height="52" rx="7" />
                    <path d="M64 19Q64 16 66 14L77 6Q83 5 83 11V42Q83 47 77 46L66 37Q64 35 64 32Z" />
                </svg>
            </button>
            <button type="button" aria-label="Voice call" className="ml-[114px] shrink-0">
                <svg className="h-[73px] w-[73px]" viewBox="3 3 18 18" fill="currentColor" aria-hidden="true">
                    <path d="M6.62 10.79c1.44 2.83 3.76 5.14 6.59 6.59l2.2-2.2c.27-.27.67-.36 1.02-.24 1.12.37 2.33.57 3.57.57.55 0 1 .45 1 1V20c0 .55-.45 1-1 1-9.39 0-17-7.61-17-17 0-.55.45-1 1-1h3.5c.55 0 1 .45 1 1 0 1.25.2 2.45.57 3.57.11.35.03.74-.25 1.02l-2.2 2.2z" />
                </svg>
            </button>
            <button type="button" aria-label="More options" className="ml-[124px] shrink-0">
                <svg className="h-16 w-4" viewBox="0 0 16 64" fill="currentColor" aria-hidden="true">
                    <circle cx="8" cy="8" r="8" />
                    <circle cx="8" cy="32" r="8" />
                    <circle cx="8" cy="56" r="8" />
                </svg>
            </button>
        </header>
    );
}

function Tail() {
    return (
        <svg className="absolute top-0 -right-7 h-[46px] w-[29px]" viewBox="0 0 29 46" fill="#e1ffc7" aria-hidden="true">
            <path d="M0 0H25Q31 2 28 9L1 45H0Z" />
        </svg>
    );
}

function Ticks() {
    return (
        <svg className="mb-3 ml-[15px] h-10 w-[60px]" viewBox="0 0 60 40" fill="none" stroke="#34b7f1" strokeWidth="5" strokeLinecap="round" aria-label="Read">
            <path d="M3 24L14 36L40 4" />
            <path d="M28 31L32 36L57 4" />
        </svg>
    );
}

function ThumbsUp() {
    return (
        <svg className="h-[113px] w-[103px]" viewBox="0 0 103 113" role="img" aria-label="Thumbs up">
            <defs>
                <linearGradient id="hand" x1="0" y1="1" x2="0.7" y2="0">
                    <stop offset="0" stopColor="#c98a63" />
                    <stop offset="0.4" stopColor="#dba780" />
                    <stop offset="1" stopColor="#e5c19d" />
                </linearGradient>
                <radialGradient id="palm">
                    <stop offset="0" stopColor="#bd8258" />
                    <stop offset="1" stopColor="#bd8258" stopOpacity="0" />
                </radialGradient>
            </defs>
            <path d="M5 51Q15 53 24 51Q29 42 37 36Q48 27 48 14L48 4Q52 -1 57 2Q67 8 66 20Q66 26 62 37L64 46L66 100L84 111Q60 114 44 110Q33 108 27 101Q18 102 8 104Q0 96 1 72Q1 58 5 51Z" fill="url(#hand)" stroke="#b9764c" strokeWidth="1.5" />
            <ellipse cx="50" cy="74" rx="20" ry="24" fill="url(#palm)" />
            <g fill="#deb58c" stroke="#b06a40" strokeWidth="2">
                <rect x="61" y="95" width="31" height="17" rx="8" />
                <rect x="59" y="79" width="40" height="18" rx="8" />
                <rect x="58" y="45" width="42" height="19" rx="9" />
                <rect x="58" y="62" width="44" height="19" rx="9" />
            </g>
        </svg>
    );
}

const testimonial = [
    'Having partnered with Mr Itunu',
    'proved him to be a sincere',
    'hardworking fellow. On bringing up',
    'an educational  business dealing',
    'with him,he went extra miles design',
    'a website with respect to that. It was',
    'implemented and got running. At the',
    'end of the day, he pushed further to',
    'make it a huge business,remitting all',
    'necessary funds to me which he dis-',
    'played a high level of transparency.',
    'I will always recommend him at all',
    'times.',
].join('\n');

const quoted = [
    'Having partnered with Mr Itunu proved',
    'him to be a sincere hardworking fellow.',
    'On bringing up an educational  business…',
].join('\n');

function Messages() {
    return (
        <main className="relative min-h-0 flex-1 overflow-hidden">
            <div className="ml-[70px] h-6 w-[783px] rounded-b-3xl bg-white shadow-[0_2px_2px_rgba(0,0,0,0.15)]" />

            <article className="mt-[10px] mr-[229px] ml-[70px] rounded-3xl bg-white pt-[17px] pr-[22px] pb-4 pl-[31px] shadow-[0_2px_2px_rgba(0,0,0,0.15)]">
                <p className="text-[64px] leading-[75px] whitespace-pre">{testimonial}</p>
                <div className="flex items-end justify-between">
                    <p className="pb-[6px] text-[64px] leading-[75px]">Mrs Rose Ijeoma Ike</p>
                    <time className="text-5xl leading-[56px] text-[#999]">10:17 PM</time>
                </div>
            </article>

            <article className="relative mt-[34px] mr-[69px] ml-[230px] rounded-3xl rounded-tr-none bg-[#e1ffc7] px-[15px] pt-4 pb-[13px] shadow-[0_2px_2px_rgba(0,0,0,0.15)]">
                <Tail />
                <blockquote className="flex overflow-hidden rounded-lg bg-[#daf6c1]">
                    <div className="w-3 shrink-0 bg-[#8e388e]" />
                    <div className="min-w-0 flex-1 rounded-r-lg border border-l-0 border-[#cbe6b4] pt-[21px] pb-5 pl-[31px]">
                        <p className="text-[56px] leading-[72px] font-medium text-[#8e388e]">Sgc F Rose Ijeoma</p>
                        <p className="mt-[7px] text-[56px] leading-[65px] whitespace-pre text-[#64745a]">{quoted}</p>
                    </div>
                </blockquote>
                <div className="mt-9 flex items-end pr-[13px] pl-[25px]">
                    <div className="flex gap-[23px] pb-[25px]">
                        <ThumbsUp />
                        <ThumbsUp />
                    </div>
                    <time className="ml-auto text-5xl leading-[56px] text-[#889b79]">11:30 PM</time>
                    <Ticks />
                </div>
            </article>

            <div className="mt-[41px] flex justify-center">
                <p className="rounded-3xl bg-[#d4eaf4] px-[29px] pt-[26px] pb-[22px] text-[52px] leading-[64px] text-[#566063] shadow-[0_2px_2px_rgba(0,0,0,0.15)]">
                    AUGUST 2, 2019
                </p>
            </div>

            <article className="relative mt-[50px] mr-[69px] ml-auto flex w-fit items-end rounded-3xl rounded-tr-none bg-[#e1ffc7] pt-[21px] pr-7 pb-[17px] pl-[31px] shadow-[0_2px_2px_rgba(0,0,0,0.15)]">
                <Tail />
                <p className="pb-2 text-[64px] leading-[75px]">Sent 56k this morning</p>
                <time className="ml-8 text-5xl leading-[56px] text-[#889b79]">9:55 AM</time>
                <Ticks />
            </article>

            <div className="mt-[10px] mr-[69px] ml-[338px] h-24 rounded-3xl bg-[#e1ffc7]" />

            <button
                type="button"
                aria-label="Scroll to latest"
                className="absolute right-[47px] bottom-[61px] flex h-[130px] w-[130px] items-center justify-center rounded-full bg-white/85 shadow-[0_3px_6px_rgba(0,0,0,0.12)]"
            >
                <svg className="mt-2 h-[42px] w-[46px]" viewBox="0 0 46 42" fill="none" stroke="#8f9597" strokeWidth="6" strokeLinecap="round" aria-hidden="true">
                    <path d="M3 3L23 20L43 3M3 21L23 38L43 21" />
                </svg>
            </button>
        </main>
    );
}

function Composer() {
    return (
        <footer className="relative flex shrink-0 items-center gap-5 pt-[13px] pr-[17px] pb-[17px] pl-5">
            <div className="flex h-[180px] min-w-0 flex-1 items-center rounded-full bg-white pr-[52px] pl-[42px] shadow-[0_2px_3px_rgba(0,0,0,0.2)]">
                <button type="button" aria-label="Emoji" className="shrink-0">
                    <svg className="h-[86px] w-[86px]" viewBox="0 0 86 86" fill="#868d93" aria-hidden="true">
                        <circle cx="43" cy="43" r="39" fill="none" stroke="#868d93" strokeWidth="7" />
                        <ellipse cx="32" cy="34" rx="6" ry="8" />
                        <ellipse cx="55" cy="34" rx="6" ry="8" />
                        <path d="M20 48Q43 51 66 48Q66 68 43 68Q20 68 20 48Z" />
                        <path d="M24 52Q43 55 62 52Q60 58 43 58Q26 58 24 52Z" fill="#fff" />
                    </svg>
                </button>
                <input
                    type="text"
                    aria-label="Message"
                    placeholder="Type a message"
                    className="ml-[43px] min-w-0 flex-1 bg-transparent pt-1 text-7xl leading-[96px] outline-none placeholder:text-[#ccc]"
                />
                <button type="button" aria-label="Attach" className="shrink-0">
                    <svg className="h-[76px] w-[83px]" viewBox="0 0 83 76" fill="none" stroke="#868d93" strokeWidth="7" strokeLinecap="round" aria-hidden="true">
                        <path d="M45 7L73 37C82 47 81 59 74 66C66 74 53 75 45 66L7 29C1 22 2 13 7 8C13 2 22 2 28 7L58 37C62 42 62 46 59 49C55 53 50 52 46 49L26 27" />
                    </svg>
                </button>
                <button type="button" aria-label="Camera" className="ml-[95px] shrink-0">
                    <svg className="h-[78px] w-20" viewBox="0 0 80 78" aria-hidden="true">
                        <rect width="80" height="78" rx="20" fill="#868d93" />
                        <circle cx="40" cy="39" r="19" fill="none" stroke="#fff" strokeWidth="7" />
                    </svg>
                </button>
            </div>
            <button
                type="button"
                aria-label="Record voice message"
                className="flex h-[188px] w-[188px] shrink-0 items-center justify-center rounded-full bg-[#00897b] shadow-[0_4px_10px_rgba(0,0,0,0.3)]"
            >
                <svg className="h-[82px] w-[60px]" viewBox="0 0 60 82" fill="none" stroke="#fff" strokeWidth="8" strokeLinecap="round" aria-hidden="true">
                    <rect x="18" y="0" width="24" height="49" rx="12" fill="#fff" stroke="none" />
                    <path d="M5 40C5 54 16 62 30 62C44 62 55 54 55 40M30 62V78" />
                </svg>
            </button>
        </footer>
    );
}

export default function App() {
    return (
        <div className="relative flex h-screen flex-col overflow-hidden bg-linear-to-b from-[#e8e9e4] from-12% via-[#ede6dd] via-35% to-[#ede3dd] font-['Roboto',sans-serif] text-black">
            <Wallpaper />
            <div className="relative flex min-h-0 flex-1 flex-col">
                <StatusBar />
                <ChatHeader />
                <Messages />
                <Composer />
            </div>
        </div>
    );
}
